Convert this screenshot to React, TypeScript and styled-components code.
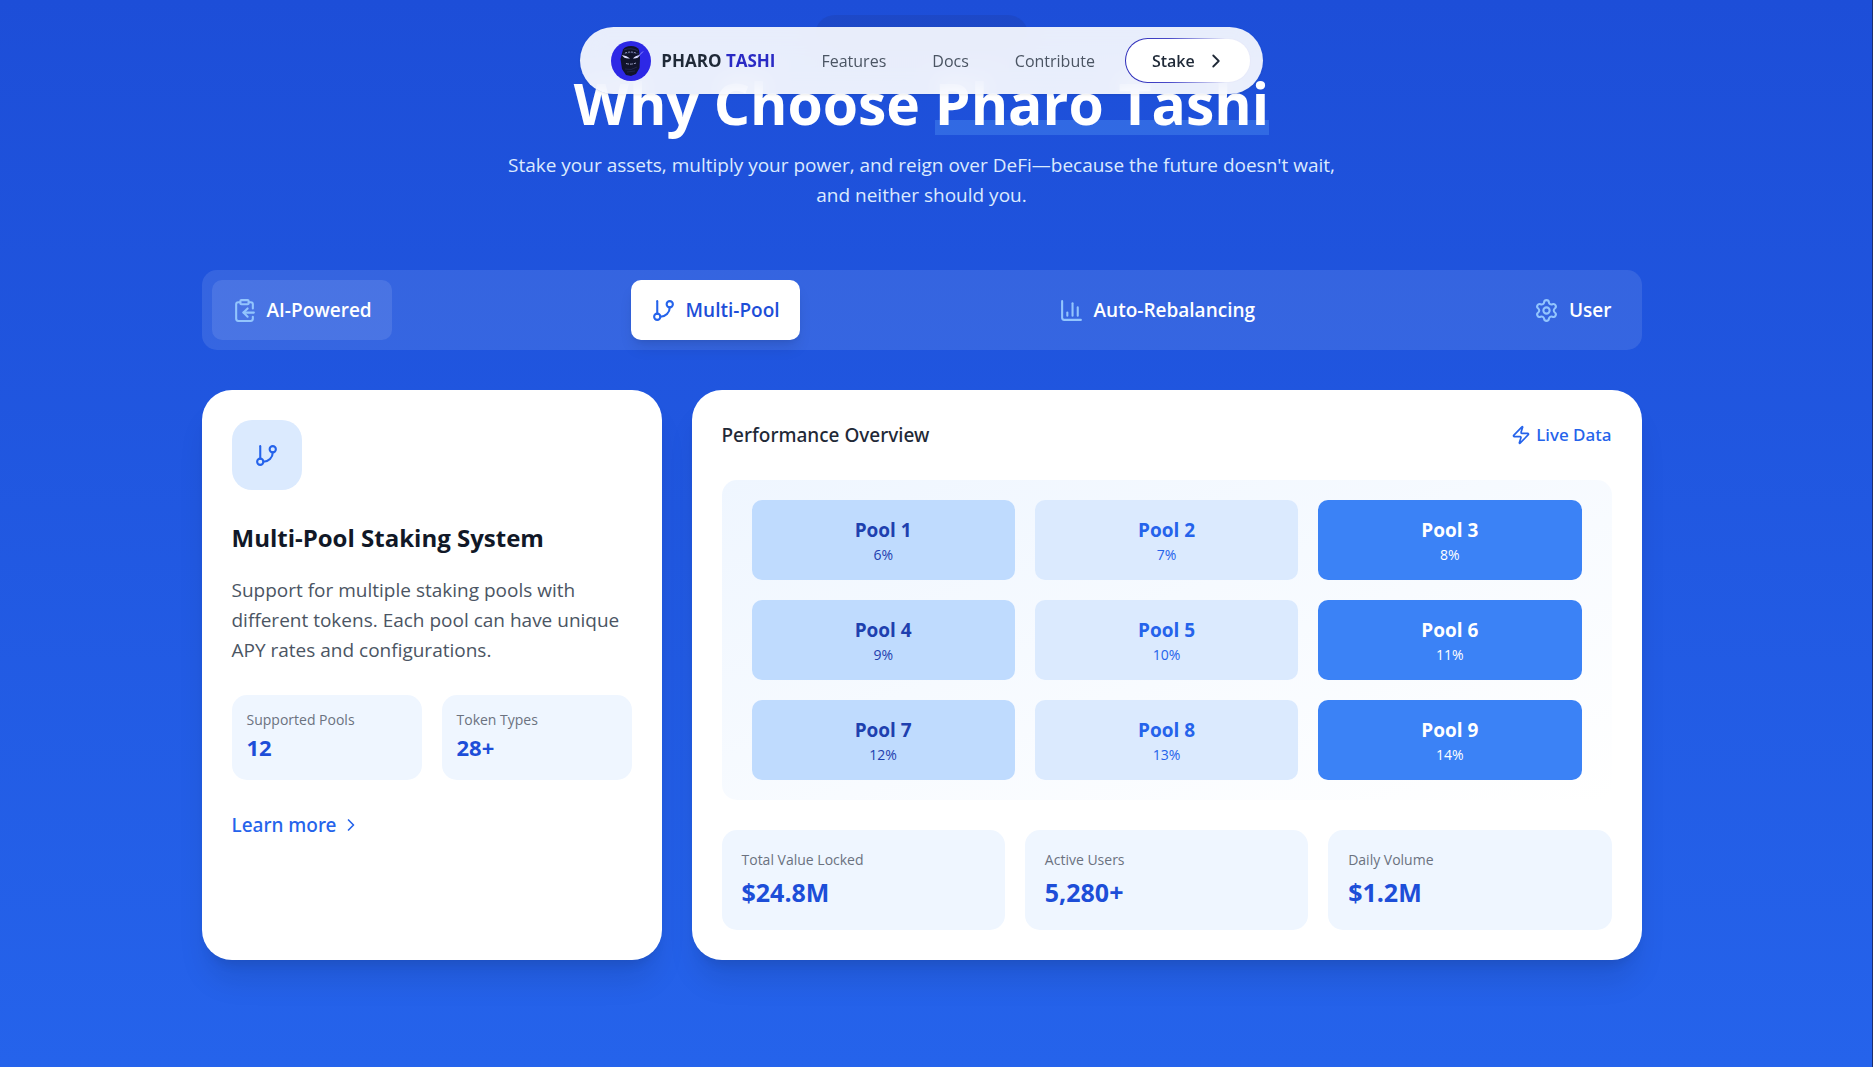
import React from 'react';
import styled, { createGlobalStyle, css } from 'styled-components';
import {
  ChartColumn,
  ChevronRight,
  ClipboardCopy,
  GitBranch,
  Settings,
  Zap,
} from 'lucide-react';

const GlobalStyle = createGlobalStyle`
  *, *::before, *::after { box-sizing: border-box; }
  html { background: #2563eb; }
  body {
    margin: 0;
    font-family: "Segoe UI", "Open Sans", "Noto Sans", sans-serif;
    font-size: 19px;
    line-height: 30px;
    color: #111827;
  }
  h2, h3, h4, p, dl, dd, dt, ul { margin: 0; padding: 0; }
  button { font: inherit; border: 0; cursor: pointer; }
  a { color: inherit; text-decoration: none; }
  svg { display: block; flex-shrink: 0; }
`;

const mediumText = css`
  font-family: "Segoe UI", "Noto Sans", "Open Sans", sans-serif;
  font-weight: 500;
`;

const Page = styled.main`
  min-height: 100vh;
  padding: 15px 29px 107px 0;
  border-right: 1px solid #1e2f6e;
  background: linear-gradient(to bottom, #1d4ed8, #2563eb);
`;

const NavHolder = styled.header`
  position: fixed;
  z-index: 10;
  top: 27px;
  left: 0;
  right: 30px;
  display: flex;
  justify-content: center;
  pointer-events: none;
`;

const Nav = styled.nav`
  display: flex;
  align-items: center;
  height: 67px;
  padding: 0 12px 0 31px;
  border-radius: 34px;
  background: rgba(255, 255, 255, 0.9);
  backdrop-filter: blur(12px);
  box-shadow: 0 1px 3px rgba(0, 0, 0, 0.08);
  font-size: 16px;
  pointer-events: auto;
`;

const Brand = styled.a`
  display: flex;
  align-items: center;
  gap: 10px;
  color: #1f2937;
  font-size: 17px;
  font-weight: 700;
`;

const BrandAccent = styled.span`
  color: #2a2ac4;
`;

const NavLinks = styled.div`
  display: flex;
  gap: 46px;
  margin: 0 30px 0 46px;
  color: #4b5563;
`;

const StakeButton = styled.button`
  display: flex;
  align-items: center;
  gap: 10px;
  height: 45px;
  padding: 0 23px 0 26px;
  border: 1px solid transparent;
  border-radius: 23px;
  background:
    linear-gradient(#fff, #fff) padding-box,
    linear-gradient(to right, #2a2ab8, #4a4ac8 35%, #e8ebfa 80%) border-box;
  color: #1f2937;
  font-weight: 600;
`;

const Hero = styled.section`
  display: flex;
  flex-direction: column;
  align-items: center;
  text-align: center;
`;

const Badge = styled.div`
  width: 213px;
  height: 40px;
  border-radius: 20px;
  background: rgba(30, 64, 175, 0.4);
`;

const HeroTitle = styled.h2`
  margin-top: 6px;
  color: #fff;
  font-size: 57px;
  line-height: 84px;
  font-weight: 700;
`;

const Underlined = styled.span`
  position: relative;
  z-index: 0;
  display: inline-block;
  &::after {
    content: '';
    position: absolute;
    z-index: -1;
    left: 0;
    right: 0;
    bottom: 10px;
    height: 15px;
    background: rgba(96, 165, 250, 0.3);
  }
`;

const HeroText = styled.p`
  max-width: 840px;
  margin-top: 5px;
  color: #dbeafe;
`;

const Container = styled.div`
  max-width: 1440px;
  margin: 0 auto;
`;

const TabBar = styled.div`
  display: flex;
  justify-content: space-between;
  margin-top: 60px;
  padding: 10px;
  border-radius: 15px;
  background: rgba(255, 255, 255, 0.1);
`;

const Tab = styled.button<{ $state?: 'active' | 'hover' }>`
  display: flex;
  align-items: center;
  gap: 10px;
  height: 60px;
  padding: 0 20px;
  border-radius: 10px;
  background: transparent;
  color: #fff;
  font-weight: 600;
  svg { color: #93c5fd; }
  ${({ $state }) =>
    $state === 'hover' &&
    css`
      background: rgba(255, 255, 255, 0.1);
    `}
  ${({ $state }) =>
    $state === 'active' &&
    css`
      background: #fff;
      color: #1d4ed8;
      box-shadow: 0 10px 15px -3px rgba(0, 0, 0, 0.1), 0 4px 6px -4px rgba(0, 0, 0, 0.1);
      svg { color: #2563eb; }
    `}
`;

const Panels = styled.div`
  display: grid;
  grid-template-columns: repeat(3, minmax(0, 1fr));
  gap: 30px;
  margin-top: 40px;
`;

const Card = styled.section<{ $span?: number }>`
  grid-column: span ${({ $span = 1 }) => $span};
  padding: 30px;
  border-radius: 30px;
  background: #fff;
  box-shadow: 0 25px 31px -6px rgba(0, 0, 0, 0.1), 0 10px 12px -7px rgba(0, 0, 0, 0.1);
`;

const IconTile = styled.div`
  display: grid;
  place-items: center;
  width: 70px;
  height: 70px;
  border-radius: 20px;
  background: #dbeafe;
  color: #2563eb;
`;

const CardTitle = styled.h3`
  margin-top: 30px;
  font-size: 24px;
  line-height: 35px;
  font-weight: 700;
`;

const CardText = styled.p`
  margin-top: 20px;
  color: #4b5563;
`;

const StatGrid = styled.dl<{ $columns: number }>`
  display: grid;
  grid-template-columns: repeat(${({ $columns }) => $columns}, minmax(0, 1fr));
  gap: 20px;
  margin-top: 30px;
`;

const Stat = styled.div<{ $large?: boolean }>`
  display: flex;
  flex-direction: column;
  gap: ${({ $large }) => ($large ? 5 : 0)}px;
  padding: ${({ $large }) => ($large ? 20 : 15)}px;
  border-radius: 15px;
  background: #eff6ff;
`;

const StatLabel = styled.dt`
  color: #6b7280;
  font-size: 14px;
  line-height: 20px;
`;

const StatValue = styled.dd<{ $large?: boolean }>`
  color: #1d4ed8;
  font-size: ${({ $large }) => ($large ? 25 : 22)}px;
  line-height: 35px;
  font-weight: 700;
`;

const LearnMore = styled.a`
  display: inline-flex;
  align-items: center;
  gap: 5px;
  margin-top: 30px;
  color: #2563eb;
  ${mediumText}
`;

const CardHeader = styled.div`
  display: flex;
  align-items: center;
  justify-content: space-between;
`;

const CardHeading = styled.h4`
  color: #1f2937;
  font-size: 19px;
  ${mediumText}
`;

const LiveData = styled.div`
  display: flex;
  align-items: center;
  gap: 5px;
  color: #2563eb;
  font-size: 17px;
  ${mediumText}
`;

const PoolGrid = styled.ul`
  display: grid;
  grid-template-columns: repeat(3, minmax(0, 1fr));
  gap: 20px;
  margin-top: 30px;
  padding: 20px 30px;
  border-radius: 15px;
  background: linear-gradient(to bottom right, #eff6ff, #fff);
  list-style: none;
`;

const poolTones = {
  soft: css`
    background: #bfdbfe;
    color: #1e40af;
  `,
  pale: css`
    background: #dbeafe;
    color: #2563eb;
  `,
  strong: css`
    background: #3b82f6;
    color: #fff;
  `,
};

const Pool = styled.li<{ $tone: keyof typeof poolTones }>`
  padding: 15px;
  border-radius: 10px;
  text-align: center;
  ${({ $tone }) => poolTones[$tone]}
`;

const PoolName = styled.div`
  font-weight: 700;
`;

const PoolRate = styled.div`
  font-size: 14px;
  line-height: 20px;
`;

const Logo = () => (
  <svg width="40" height="40" viewBox="0 0 40 40" aria-hidden="true">
    <circle cx="20" cy="20" r="20" fill="#2d28e6" />
    <path d="M12 8.500Q14 5 20 5t8 4l1 8-.5 10-3.500 6-5 2-5-1-4-6-1.500-10z" fill="#11142b" />
    <path d="M13 9q7-3 14 1M12 13q8-3 16 0" stroke="#252a52" strokeWidth="1" fill="none" />
    <path d="M14 12q6-2 11 0" stroke="#8a90b8" strokeWidth="1" fill="none" strokeDasharray="2 1" />
    <path d="M11 14q5 .5 8 3.500-6 .5-8-3.500zM29 14q-5 .5-7 3.500 5 .5 7-3.500z" fill="#dcdcff" />
    <path d="M27 15.500l5-5" stroke="#8f8cff" strokeWidth="1" />
    <path d="M15 22.500q5 1.500 10-.5" stroke="#9a9fc4" strokeWidth="1" fill="none" strokeDasharray="3 1" />
    <path d="M14 28q6 2 12-2M16 31l8-1" stroke="#20254a" strokeWidth="1" fill="none" />
  </svg>
);

const tabs = [
  { label: 'AI-Powered', Icon: ClipboardCopy, state: 'hover' },
  { label: 'Multi-Pool', Icon: GitBranch, state: 'active' },
  { label: 'Auto-Rebalancing', Icon: ChartColumn },
  { label: 'User', Icon: Settings },
] as const;

const tones = ['soft', 'pale', 'strong'] as const;

const pools = Array.from({ length: 9 }, (_, i) => ({
  name: `Pool ${i + 1}`,
  rate: `${i + 6}%`,
  tone: tones[i % 3],
}));

const summary = [
  ['Total Value Locked', '$24.8M'],
  ['Active Users', '5,280+'],
  ['Daily Volume', '$1.2M'],
];

const poolStats = [
  ['Supported Pools', '12'],
  ['Token Types', '28+'],
];

export default function App() {
  return (
    <>
      <GlobalStyle />
      <NavHolder>
        <Nav>
          <Brand href="#">
            <Logo />
            <span>
              PHARO <BrandAccent>TASHI</BrandAccent>
            </span>
          </Brand>
          <NavLinks>
            <a href="#features">Features</a>
            <a href="#docs">Docs</a>
            <a href="#contribute">Contribute</a>
          </NavLinks>
          <StakeButton type="button">
            Stake
            <ChevronRight size={22} />
          </StakeButton>
        </Nav>
      </NavHolder>
      <Page>
        <Hero>
          <Badge />
          <HeroTitle>
            Why Choose <Underlined>Pharo Tashi</Underlined>
          </HeroTitle>
          <HeroText>
            Stake your assets, multiply your power, and reign over DeFi—because the future doesn't
            wait, and neither should you.
          </HeroText>
        </Hero>
        <Container>
          <TabBar role="tablist">
            {tabs.map(({ label, Icon, ...rest }) => {
              const state = 'state' in rest ? rest.state : undefined;
              return (
                <Tab
                  key={label}
                  type="button"
                  role="tab"
                  aria-selected={state === 'active'}
                  $state={state}
                >
                  <Icon size={25} />
                  {label}
                </Tab>
              );
            })}
          </TabBar>
          <Panels>
            <Card>
              <IconTile>
                <GitBranch size={25} />
              </IconTile>
              <CardTitle>Multi-Pool Staking System</CardTitle>
              <CardText>
                Support for multiple staking pools with different tokens. Each pool can have unique
                APY rates and configurations.
              </CardText>
              <StatGrid $columns={2}>
                {poolStats.map(([label, value]) => (
                  <Stat key={label}>
                    <StatLabel>{label}</StatLabel>
                    <StatValue>{value}</StatValue>
                  </Stat>
                ))}
              </StatGrid>
              <LearnMore href="#features">
                Learn more
                <ChevronRight size={20} />
              </LearnMore>
            </Card>
            <Card $span={2}>
              <CardHeader>
                <CardHeading>Performance Overview</CardHeading>
                <LiveData>
                  <Zap size={20} />
                  Live Data
                </LiveData>
              </CardHeader>
              <PoolGrid>
                {pools.map(({ name, rate, tone }) => (
                  <Pool key={name} $tone={tone}>
                    <PoolName>{name}</PoolName>
                    <PoolRate>{rate}</PoolRate>
                  </Pool>
                ))}
              </PoolGrid>
              <StatGrid $columns={3}>
                {summary.map(([label, value]) => (
                  <Stat key={label} $large>
                    <StatLabel>{label}</StatLabel>
                    <StatValue $large>{value}</StatValue>
                  </Stat>
                ))}
              </StatGrid>
            </Card>
          </Panels>
        </Container>
      </Page>
    </>
  );
}
